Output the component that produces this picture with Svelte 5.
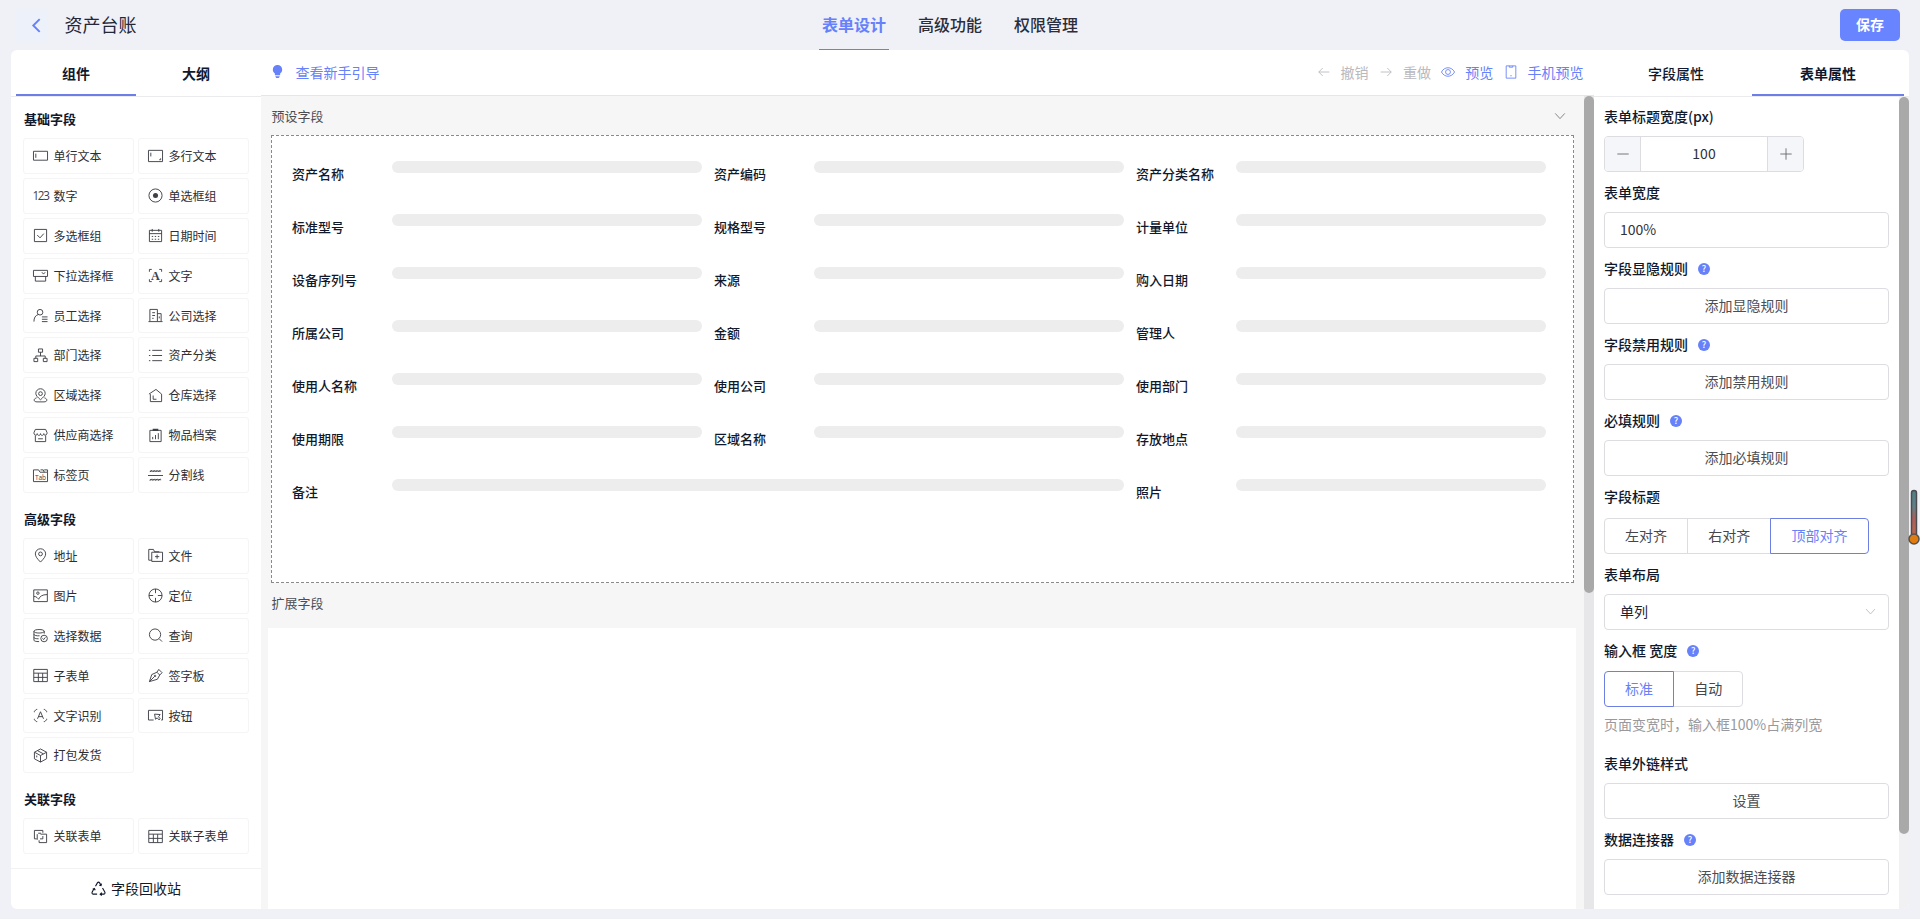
<script lang="ts">
  type Icon = { d?: string; fill?: string; t?: string; size?: number; y?: number; serif?: boolean };

  const icons: Record<string, Icon> = {
    input: { d: 'M.5 3.500h15v9.500H.5zM3 6v4.500' },
    textarea: { d: 'M.5 2.500h15v12H.5zM3 5v4M13.500 11v1.500H12' },
    number: { t: '123', size: 12.5, y: 12.500 },
    radio: { d: 'M15 8A7 7 0 1 1 1 8a7 7 0 0 1 14 0z', fill: 'M10.700 8a2.700 2.700 0 1 1-5.400 0 2.700 2.700 0 0 1 5.400 0z' },
    checkbox: { d: 'M1.500 1.500h13v13h-13zM4.500 7.500l3 3 4-4.500' },
    date: { d: 'M1.500 2.500h13v12h-13zM1.500 6h13M4.500 1v3M11.500 1v3M4 9h1.500M7.200 9h1.500M10.500 9H12M4 12h1.500M7.200 12h1.500M10.500 12H12' },
    select: { d: 'M.5 2.500h15v6.500H.5zM2.500 9v5h11V9M9.500 4.500l1.700 2 1.800-2' },
    text: { d: 'M1.500 4V1.500H4M12 1.500h2.500V4M14.500 12v2.500H12M4 14.500H1.500V12', t: 'A', size: 13, y: 12.500, serif: true },
    user: { d: 'M10.500 4.500a3 3 0 1 1-6 0 3 3 0 0 1 6 0zM5.500 7C2.500 8 1 10.500 1 14.500M9.500 9.500h6M9.500 12h6M9.500 14.500h6' },
    company: { d: 'M2 14V1.500h8V14M10 6h4v8M.5 14.500h15M4.500 5h3M4.500 8h3M4.500 11H6M12 9v2' },
    dept: { d: 'M5.800 1h4.400v3.500H5.800zM8 4.500v4M3 11V8.500h10V11M1 11h4v3.500H1zM11 11h4v3.500h-4z' },
    list: { d: 'M4.500 2.500H15M4.500 8H15M4.500 13.500H15M1 2.500h1.500M1 8h1.500M1 13.500h1.500' },
    area: { d: 'M8 12.500C5 10 3 8 3 5.800a5 5 0 0 1 10 0C13 8 11 10 8 12.500zM10 6a2 2 0 1 1-4 0 2 2 0 0 1 4 0zM3.800 10.500c-3.500 1-3.500 4.300.5 4.300h7.400c4 0 4-3.300.5-4.300' },
    store: { d: 'M2.500 14.500h12V6.500L8.500 1.500 1 6.500M2.500 6.500v8M5.500 8v4H9' },
    shop: { d: 'M2.500 1.500h11L15 5c.3 3-3.400 3.500-3.500 1 0 2.500-3.500 2.500-3.500 0 0 2.500-3.500 2.500-3.500 0C4.400 8.500.7 8 1 5zM2.500 8v6.500h11V8M5.500 11.500h5' },
    archive: { d: 'M2 2.500h12v12H2zM5 12V9.500M8 12V7.500M11 12V5.500', fill: 'M5 .8h6v2.400H5z' },
    tab: { d: 'M.5 14.500V2H6l1.500 2.500h8v10zM8 2h3l1 2.500M12 2h3.500v2.500', t: 'Tab', size: 7, y: 12.300 },
    divider: { d: 'M0 8h16M2 4.300l2-2M5 4.300l2-2M8 4.300l2-2M11 4.300l2-2M2 13.500l2-2M5 13.500l2-2M8 13.500l2-2M11 13.500l2-2M2 3.300h12M2 12.500h12' },
    pin: { d: 'M8 15C4.500 11.500 2.500 9 2.500 6.300a5.500 5.500 0 0 1 11 0C13.500 9 11.500 11.500 8 15zM10 6.300a2 2 0 1 1-4 0 2 2 0 0 1 4 0z' },
    file: { d: 'M4 13H.8V1.500h5L7 4h5M4 4.500h11.500v9.800H4zM9.700 7v4.500M7.500 9.200H12' },
    image: { d: 'M.8 2h14.500v12.500H.8zM6.500 5.500a1.300 1.300 0 1 1-2.600 0 1.300 1.300 0 0 1 2.600 0zM1 9c3 0 4 2 5 3 1-3 4-5 9-5' },
    target: { d: 'M15 8A7 7 0 1 1 1 8a7 7 0 0 1 14 0zM8 1v4.500M8 10.500V15M1 8h4.500M10.500 8H15' },
    data: { d: 'M12 3.500c0 2.500-11 2.500-11 0s11-2.500 11 0V6M1 3.500V13c0 1 2 1.500 5.500 1.500M1 6.700c0 1.300 3 1.800 6 1.600M1 10c0 1 2 1.500 5 1.500M15.300 11.200a3.500 3.500 0 1 1-7 0 3.500 3.500 0 0 1 7 0zM10 11l1.500 1.300L13.200 10' },
    search: { d: 'M13.500 7A6 6 0 1 1 1.500 7a6 6 0 0 1 12 0zM12 11.500l3 3' },
    table: { d: 'M.8 1.500h14.500v13H.8zM1 5.500h14M1 10h14M5.700 5.500v9M10.300 5.500v9' },
    pen: { d: 'M1.500 14.500L4 7l5.500-2.500 3 3L10 12zM9.500 4.500L11.500 1.500 15 5l-2.500 2.500M1.500 14.500L7 9M8.300 8.500a.8.8 0 1 1-1.600 0 .8.8 0 0 1 1.600 0z' },
    ocr: { d: 'M1.500 4.500v-1l2-2h1M11.500 1.500h1l2 2v1M14.500 11.500v1l-2 2h-1M4.500 14.500h-1l-2-2v-1M4.800 11.500L8 4l3.200 7.500M6 9.200h4' },
    button: { d: 'M6 12.800H.5V2.500h15v10.300H14M7 6.500l6 .5-1.800 2.300 1.800 2.200-1.200 1.200-2-2.200L8 12z' },
    box: { d: 'M8 1l6.500 3.500v7L8 15l-6.500-3.500v-7zM1.500 4.500L8 8l6.500-3.500M8 8v7M4.800 2.800L11 6.200M4 8v2' },
    link: { d: 'M10.500 4V1.500h-9v9H4M8.500 4.500h-3M4.500 5.500v6M7.500 10.500h3v-3M8 5.500h6.500v9h-8V12' },
  };

  const groups = [
    {
      title: '基础字段',
      items: [
        ['input', '单行文本'], ['textarea', '多行文本'],
        ['number', '数字'], ['radio', '单选框组'],
        ['checkbox', '多选框组'], ['date', '日期时间'],
        ['select', '下拉选择框'], ['text', '文字'],
        ['user', '员工选择'], ['company', '公司选择'],
        ['dept', '部门选择'], ['list', '资产分类'],
        ['area', '区域选择'], ['store', '仓库选择'],
        ['shop', '供应商选择'], ['archive', '物品档案'],
        ['tab', '标签页'], ['divider', '分割线'],
      ],
    },
    {
      title: '高级字段',
      items: [
        ['pin', '地址'], ['file', '文件'],
        ['image', '图片'], ['target', '定位'],
        ['data', '选择数据'], ['search', '查询'],
        ['table', '子表单'], ['pen', '签字板'],
        ['ocr', '文字识别'], ['button', '按钮'],
        ['box', '打包发货'],
      ],
    },
    {
      title: '关联字段',
      items: [['link', '关联表单'], ['table', '关联子表单']],
    },
  ];

  const fields = [
    '资产名称', '资产编码', '资产分类名称',
    '标准型号', '规格型号', '计量单位',
    '设备序列号', '来源', '购入日期',
    '所属公司', '金额', '管理人',
    '使用人名称', '使用公司', '使用部门',
    '使用期限', '区域名称', '存放地点',
    '备注', '照片',
  ];

  let titleWidth = $state(100);
  let align = $state('顶部对齐');
  let inputWidth = $state('标准');
</script>

{#snippet icon(name: string)}
  {@const ic = icons[name]}
  <svg class="icon" viewBox="0 0 16 16">
    {#if ic.d}<path d={ic.d} />{/if}
    {#if ic.fill}<path class="solid" d={ic.fill} />{/if}
    {#if ic.t}
      <text class:serif={ic.serif} class:tight={name === 'number'} x="8" y={ic.y} font-size={ic.size} text-anchor="middle">{ic.t}</text>
    {/if}
  </svg>
{/snippet}

{#snippet label(text: string, help: boolean)}
  <div class="prop-label">
    <span>{text}</span>
    {#if help}<i class="help">?</i>{/if}
  </div>
{/snippet}

<div class="page">
  <header class="topbar">
    <div class="title-wrap">
      <button class="back" aria-label="返回">
        <svg viewBox="0 0 16 16"><path d="M11 2L5 8l6 6" /></svg>
      </button>
      <span class="title">资产台账</span>
    </div>
    <nav class="nav">
      <span class="nav-item active">表单设计</span>
      <span class="nav-item">高级功能</span>
      <span class="nav-item">权限管理</span>
    </nav>
    <button class="save">保存</button>
  </header>

  <div class="designer">
    <aside class="left">
      <div class="tabs left-tabs">
        <div class="tab active">组件</div>
        <div class="tab">大纲</div>
      </div>
      <div class="widgets">
        {#each groups as group}
          <h4>{group.title}</h4>
          <div class="widget-grid">
            {#each group.items as [name, text]}
              <div class="widget">{@render icon(name)}<span>{text}</span></div>
            {/each}
          </div>
        {/each}
      </div>
      <div class="recycle">
        <svg class="recycle-icon" viewBox="0 0 16 16">
          <path d="M4.800 5.500L6.800 2q1.200-1.600 2.400 0l1.300 2.300M8.800 4.500l1.900.3.500-2M12.300 7.500l2.400 4.200q.8 1.800-1 2.300H10M11.500 12.300L9.800 14l1.700 1.500M6.500 14H2.300q-1.800-.5-1-2.300l2-3.700M1.800 8.800L3.600 8l.9 1.800" />
        </svg>
        <span>字段回收站</span>
      </div>
    </aside>

    <main class="center">
      <div class="toolbar">
        <div class="tool guide">
          <svg class="bulb" viewBox="0 0 12 16"><path d="M6 1a5 5 0 0 0-5 5c0 2 1 3 2.200 4.200V12h5.600v-1.800C10 9 11 8 11 6a5 5 0 0 0-5-5zM3.800 13h4.400v1H7.500v1h-3v-1h-.7z" /></svg>
          <span>查看新手引导</span>
        </div>
        <div class="tools">
          <div class="tool disabled">
            <svg viewBox="0 0 16 16"><path d="M14 8H2M6.500 3.500L2 8l4.500 4.500" /></svg>
            <span>撤销</span>
          </div>
          <div class="tool disabled">
            <svg viewBox="0 0 16 16"><path d="M2 8h12M9.500 3.500L14 8l-4.500 4.500" /></svg>
            <span>重做</span>
          </div>
          <div class="tool">
            <svg viewBox="0 0 16 16"><path d="M.5 8C4 1.500 12 1.500 15.500 8 12 14.500 4 14.500.5 8zM10.800 8a2.800 2.800 0 1 1-5.600 0 2.800 2.800 0 0 1 5.600 0z" /></svg>
            <span>预览</span>
          </div>
          <div class="tool">
            <svg viewBox="0 0 16 16"><path d="M2.500 1h11v14h-11zM6 1v1.500h4V1M7.200 12.300h1.600" /></svg>
            <span>手机预览</span>
          </div>
        </div>
      </div>
      <div class="canvas-wrap">
        <div class="canvas">
          <div class="section-head">
            <span>预设字段</span>
            <svg class="arrow" viewBox="0 0 16 16"><path d="M2.500 5L8 11l5.500-6" /></svg>
          </div>
          <div class="preset">
            {#each fields as field}
              <div class="field" class:wide={field === '备注'}>
                <span class="field-name">{field}</span>
                <span class="field-bar"></span>
              </div>
            {/each}
          </div>
          <div class="section-head extend">扩展字段</div>
          <div class="drop"></div>
        </div>
        <div class="scrollbar"><div class="thumb short"></div></div>
      </div>
    </main>

    <aside class="right">
      <div class="tabs right-tabs">
        <div class="tab">字段属性</div>
        <div class="tab active">表单属性</div>
      </div>
      <div class="props-wrap">
        <div class="props">
          {@render label('表单标题宽度(px)', false)}
          <div class="stepper">
            <button onclick={() => titleWidth--} aria-label="减少"><svg viewBox="0 0 16 16"><path d="M1.500 8h13" /></svg></button>
            <span>{titleWidth}</span>
            <button onclick={() => titleWidth++} aria-label="增加"><svg viewBox="0 0 16 16"><path d="M1.500 8h13M8 1.500v13" /></svg></button>
          </div>

          {@render label('表单宽度', false)}
          <div class="control">100%</div>

          {@render label('字段显隐规则', true)}
          <button class="wide-btn">添加显隐规则</button>

          {@render label('字段禁用规则', true)}
          <button class="wide-btn">添加禁用规则</button>

          {@render label('必填规则', true)}
          <button class="wide-btn">添加必填规则</button>

          <div class="roomy">{@render label('字段标题', false)}</div>
          <div class="radios">
            {#each ['左对齐', '右对齐', '顶部对齐'] as item}
              <button class:active={align === item} onclick={() => (align = item)}>{item}</button>
            {/each}
          </div>

          {@render label('表单布局', false)}
          <div class="control select">
            <span>单列</span>
            <svg viewBox="0 0 16 16"><path d="M2.500 5L8 11l5.500-6" /></svg>
          </div>

          <div class="snug">{@render label('输入框 宽度', true)}</div>
          <div class="radios">
            {#each ['标准', '自动'] as item}
              <button class:active={inputWidth === item} onclick={() => (inputWidth = item)}>{item}</button>
            {/each}
          </div>
          <p class="hint">页面变宽时，输入框100%占满列宽</p>

          {@render label('表单外链样式', false)}
          <button class="wide-btn">设置</button>

          {@render label('数据连接器', true)}
          <button class="wide-btn">添加数据连接器</button>
        </div>
        <div class="scrollbar pale"><div class="thumb long"></div></div>
      </div>
    </aside>
  </div>

  <svg class="thermo" viewBox="0 0 12 58">
    <defs>
      <linearGradient id="temp" x1="0" y1="0" x2="0" y2="1">
        <stop offset="0" stop-color="#4f7f86" />
        <stop offset="0.35" stop-color="#5f8086" />
        <stop offset="0.6" stop-color="#a85f5c" />
        <stop offset="1" stop-color="#c0664a" />
      </linearGradient>
    </defs>
    <rect x="3.500" y="1.500" width="5" height="46" rx="2.500" fill="url(#temp)" stroke="#4b4b4f" stroke-width="1.500" />
    <circle cx="6" cy="50" r="5" fill="#e07b10" stroke="#55524f" stroke-width="1.500" />
  </svg>
</div>

<style>
  :global(body) {
    margin: 0;
    background: #f0f0f7;
  }

  .page {
    --accent: #6681fa;
    position: relative;
    box-sizing: border-box;
    height: 919px;
    padding: 0 11px 10px;
    overflow: hidden;
    display: flex;
    flex-direction: column;
    background: #f0f0f7;
    color: #10182c;
    font-family: "Noto Sans CJK SC", sans-serif;
    font-size: 14px;
    line-height: 20px;
  }

  svg {
    display: block;
    flex-shrink: 0;
    fill: none;
    stroke: currentColor;
  }

  button {
    padding: 0;
    border: 0;
    background: none;
    color: inherit;
    font: inherit;
  }

  .topbar {
    flex: 0 0 50px;
    display: grid;
    grid-template-columns: 1fr auto 1fr;
    align-items: center;
  }

  .title-wrap {
    display: flex;
    align-items: center;
    gap: 16.5px;
    padding-left: 5px;
  }

  .back {
    display: flex;
    align-items: center;
    justify-content: center;
    width: 32px;
    height: 32px;
    padding-left: 9px;
    box-sizing: border-box;
    border-radius: 4px;
    background: #edf1fa;
    color: var(--accent);
  }

  .back svg {
    width: 17px;
    height: 17px;
    stroke-width: 1.8;
  }

  .title {
    padding-bottom: 2px;
    font-size: 18px;
    color: #22273a;
  }

  .nav {
    display: flex;
    gap: 26px;
    height: 50px;
    padding-right: 20px;
  }

  .nav-item {
    box-sizing: border-box;
    height: 50px;
    padding: 0 3px;
    line-height: 48px;
    font-size: 16px;
    font-weight: 500;
    color: #2b2d3a;
  }

  .nav-item.active {
    color: var(--accent);
    font-weight: 700;
    border-bottom: 1px solid #6d7ee8;
  }

  .save {
    justify-self: end;
    width: 60px;
    height: 32px;
    margin-right: 9px;
    padding-bottom: 2px;
    border-radius: 5px;
    background: #6984ff;
    color: #fff;
    font-weight: 700;
  }

  .designer {
    flex: 1;
    display: flex;
    min-height: 0;
    width: 1898px;
    border-radius: 6px;
    overflow: hidden;
    background: #fff;
  }

  .left {
    flex: 0 0 250px;
    display: flex;
    flex-direction: column;
  }

  .tabs {
    box-sizing: border-box;
    flex: 0 0 46px;
    display: flex;
    border-bottom: 1px solid #ebebee;
  }

  .tab {
    box-sizing: border-box;
    height: 46px;
    line-height: 46px;
    text-align: center;
    font-weight: 500;
  }

  .tab.active {
    font-weight: 700;
    border-bottom: 2px solid #6d7ee8;
  }

  .left-tabs {
    padding-left: 5px;
  }

  .left-tabs .tab {
    width: 120px;
    font-weight: 700;
  }

  .widgets {
    flex: 1;
    padding: 0 12px;
    overflow: hidden;
  }

  h4 {
    margin: 0 0 9px 1px;
    padding-top: 12px;
    font-size: 13px;
    line-height: 20px;
    font-weight: 700;
  }

  .widget-grid {
    display: grid;
    grid-template-columns: 111px 111px;
    grid-auto-rows: 35.9px;
    gap: 4px;
    margin-bottom: 4px;
  }

  .widget {
    display: flex;
    align-items: center;
    gap: 5.5px;
    padding-left: 9px;
    border: 1px solid #f5f5f6;
    border-radius: 3px;
    font-size: 12px;
    color: #2c2e33;
  }

  .icon {
    width: 15px;
    height: 15px;
    stroke: #3f4147;
    overflow: visible;
  }

  .icon .solid {
    fill: #3f4147;
    stroke: none;
  }

  .icon text {
    fill: #3f4147;
    stroke: none;
    font-family: "Open Sans", sans-serif;
  }

  .icon text.tight {
    letter-spacing: -1.5px;
  }

  .icon text.serif {
    font-family: "Liberation Serif", serif;
    font-weight: 700;
  }

  .recycle {
    box-sizing: border-box;
    flex: 0 0 41px;
    display: flex;
    align-items: center;
    justify-content: center;
    gap: 5px;
    padding-bottom: 2px;
    border-top: 1px solid #f2f2f4;
  }

  .recycle-icon {
    width: 15px;
    height: 15px;
    stroke-width: 1.2;
  }

  .center {
    flex: 0 0 1333px;
    display: flex;
    flex-direction: column;
    background: #f6f6f7;
  }

  .toolbar {
    box-sizing: border-box;
    flex: 0 0 46px;
    display: flex;
    align-items: center;
    justify-content: space-between;
    padding: 0 10.5px 2px 10px;
    border-bottom: 1px solid #e6e6e9;
    background: #fff;
  }

  .tools {
    display: flex;
    gap: 10.3px;
  }

  .tool {
    display: flex;
    align-items: center;
    gap: 10px;
    color: var(--accent);
  }

  .tool svg {
    width: 14px;
    height: 14px;
  }

  .tool.disabled {
    color: #b9b9be;
  }

  .tool .bulb {
    width: 13px;
    height: 15px;
    fill: var(--accent);
    stroke: none;
  }

  .guide {
    gap: 11.5px;
  }

  .canvas-wrap,
  .props-wrap {
    flex: 1;
    display: flex;
    min-height: 0;
  }

  .canvas {
    flex: 1;
    display: flex;
    flex-direction: column;
    padding: 0 8px 0 7px;
  }

  .section-head {
    display: flex;
    align-items: center;
    justify-content: space-between;
    height: 39px;
    box-sizing: border-box;
    padding: 1px 9px 1px 3.5px;
    font-size: 13px;
    color: #4c4e53;
  }

  .section-head.extend {
    height: 45px;
    padding: 0 0 6px 3.5px;
  }

  .arrow {
    width: 14px;
    height: 14px;
    color: #777;
  }

  .preset {
    box-sizing: border-box;
    width: 1303px;
    height: 448px;
    margin-left: 3px;
    padding: 25px 20px 0;
    display: grid;
    grid-template-columns: repeat(3, 410px);
    grid-auto-rows: 53px;
    column-gap: 12px;
    border: 1px dashed #8a8a8a;
    background: #fff;
  }

  .field {
    display: flex;
  }

  .field.wide {
    grid-column: span 2;
  }

  .field-name {
    flex: 0 0 100px;
    padding-top: 3px;
    font-size: 13px;
    font-weight: 500;
  }

  .field-bar {
    flex: 1;
    height: 12px;
    border-radius: 6px;
    background: #ededee;
  }

  .drop {
    flex: 1;
    background: #fff;
  }

  .scrollbar {
    flex: 0 0 10px;
    background: #e7e7e9;
  }

  .scrollbar.pale {
    background: #f1f1f4;
  }

  .thumb {
    border-radius: 5px;
    background: #a9a9a9;
  }

  .thumb.short {
    height: 497px;
  }

  .thumb.long {
    height: 737px;
  }

  .right {
    flex: 1;
    display: flex;
    flex-direction: column;
  }

  .right-tabs {
    padding: 0 5px 0 6px;
  }

  .right-tabs .tab {
    flex: 1;
  }

  .props {
    flex: 1;
    margin-top: -1px;
    padding: 0 10px;
  }

  .prop-label {
    box-sizing: border-box;
    height: 40px;
    display: flex;
    align-items: center;
    gap: 10px;
    font-weight: 500;
  }

  .roomy {
    padding-bottom: 2px;
  }

  .snug {
    padding-bottom: 1px;
  }

  .help {
    width: 12px;
    height: 12px;
    margin-top: 1px;
    border-radius: 50%;
    background: var(--accent);
    color: #fff;
    font-size: 9px;
    font-style: normal;
    line-height: 12px;
    text-align: center;
  }

  .control,
  .wide-btn,
  .stepper {
    box-sizing: border-box;
    display: flex;
    align-items: center;
    width: 285px;
    height: 36px;
    border: 1px solid #dddde1;
    border-radius: 4px;
    color: #2f3238;
  }

  .control {
    padding: 0 11px 2px 15px;
  }

  .wide-btn {
    justify-content: center;
    padding-bottom: 3px;
    color: #4c4e53;
  }

  .stepper {
    width: 200px;
    overflow: hidden;
  }

  .stepper button {
    flex: 0 0 35px;
    display: flex;
    align-items: center;
    justify-content: center;
    height: 100%;
    background: #f5f6f9;
    color: #666;
  }

  .stepper svg {
    width: 14px;
    height: 14px;
  }

  .stepper span {
    box-sizing: border-box;
    flex: 1;
    height: 100%;
    line-height: 33px;
    text-align: center;
    border: solid #dddde1;
    border-width: 0 1px;
  }

  .select {
    justify-content: space-between;
    color: #1d2130;
  }

  .select svg {
    width: 13px;
    height: 13px;
    color: #b4b6bc;
  }

  .radios {
    display: flex;
  }

  .radios button {
    box-sizing: border-box;
    height: 36px;
    padding: 0 20.1px 3px;
    border: 1px solid #dddde1;
    color: #44464c;
  }

  .radios button + button {
    margin-left: -1px;
  }

  .radios button:first-child {
    border-radius: 4px 0 0 4px;
  }

  .radios button:last-child {
    border-radius: 0 4px 4px 0;
  }

  .radios button.active {
    position: relative;
    border-color: #6d7fe0;
    color: var(--accent);
  }

  .hint {
    margin: 7px 0 9px;
    color: #97999e;
  }

  .thermo {
    position: absolute;
    top: 489px;
    right: 0;
    width: 12px;
    height: 58px;
    stroke: none;
  }
</style>
